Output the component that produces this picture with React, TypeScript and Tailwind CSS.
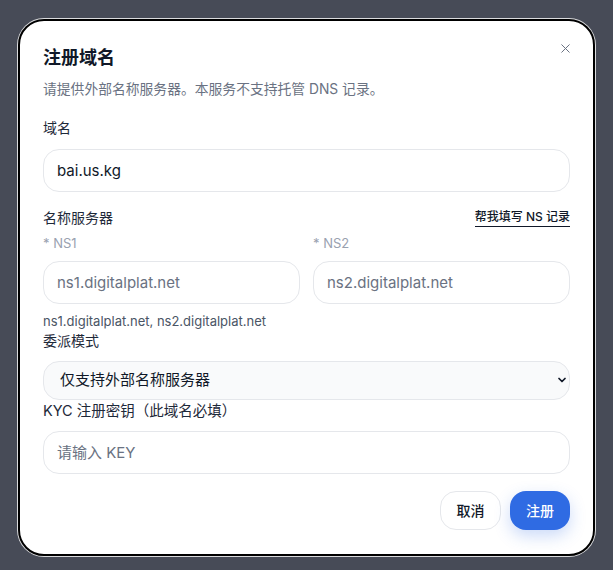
import { X, ChevronDown } from "lucide-react";

const font = { fontFamily: "Inter, 'Noto Sans CJK SC', sans-serif" };

const inputCls =
  "h-[43px] w-full rounded-2xl border border-gray-200 bg-white px-[13px] text-[15px] text-gray-900 outline-none placeholder:text-gray-500";

export default function App() {
  return (
    <div className="flex min-h-[570px] w-full justify-center bg-[#474b57] pt-[19px] [font-family:Inter,'Noto_Sans_CJK_SC',sans-serif]">
      <div className="relative h-[537px] w-[577px] rounded-[26px] border-2 border-black bg-white px-[23px] pt-[24px] ring-1 ring-white/80">
        <button className="absolute right-[20px] top-[20px] text-gray-500">
          <X className="h-[15px] w-[15px]" strokeWidth={1.6} />
        </button>
        <h2 className="text-[18px] font-bold leading-[26px] text-gray-900">注册域名</h2>
        <p className="mt-[9px] text-[13.8px] leading-[18px] text-gray-500">
          请提供外部名称服务器。本服务不支持托管 DNS 记录。
        </p>

        <div className="mt-[21px] text-[14px] leading-[18px] text-gray-800">域名</div>
        <input className={`${inputCls} mt-[12px]`} defaultValue="bai.us.kg" style={font} />

        <div className="mt-[17px] flex items-center justify-between">
          <span className="text-[14px] leading-[18px] text-gray-800">名称服务器</span>
          <button className="border-b border-gray-900 pb-[1px] text-[12px] font-medium leading-[16px] text-gray-900">
            帮我填写 NS 记录
          </button>
        </div>

        <div className="mt-[7px] grid grid-cols-2 gap-[13px]">
          <div>
            <div className="text-[13px] leading-[18px] text-gray-400">* NS1</div>
            <input className={`${inputCls} mt-[9px]`} placeholder="ns1.digitalplat.net" style={font} />
          </div>
          <div>
            <div className="text-[13px] leading-[18px] text-gray-400">* NS2</div>
            <input className={`${inputCls} mt-[9px]`} placeholder="ns2.digitalplat.net" style={font} />
          </div>
        </div>

        <p className="mt-[9px] text-[13px] leading-[16px] text-gray-600">
          ns1.digitalplat.net, ns2.digitalplat.net
        </p>
        <div className="mt-[3px] text-[14px] leading-[18px] text-gray-800">委派模式</div>
        <div className="relative mt-[11px]">
          <div className="flex h-[39px] w-full items-center rounded-2xl border border-gray-200 bg-gray-50 px-[16px] text-[15px] text-gray-900">
            仅支持外部名称服务器
          </div>
          <ChevronDown
            className="absolute right-[2px] top-[13px] h-[12px] w-[12px] text-gray-900"
            strokeWidth={3.5}
          />
        </div>

        <div className="mt-[2px] text-[14.5px] leading-[18px] text-gray-800">KYC 注册密钥（此域名必填）</div>
        <input className={`${inputCls} mt-[11px]`} placeholder="请输入 KEY" style={font} />

        <div className="mt-[17px] flex justify-end gap-[9px]">
          <button className="h-[39px] w-[61px] rounded-2xl border border-gray-200 bg-white text-[14px] font-medium text-gray-900">
            取消
          </button>
          <button className="h-[39px] w-[60px] rounded-2xl bg-[#2f6be3] text-[14px] font-medium text-white shadow-[0_6px_16px_rgba(47,107,227,0.25)]">
            注册
          </button>
        </div>
      </div>
    </div>
  );
}
